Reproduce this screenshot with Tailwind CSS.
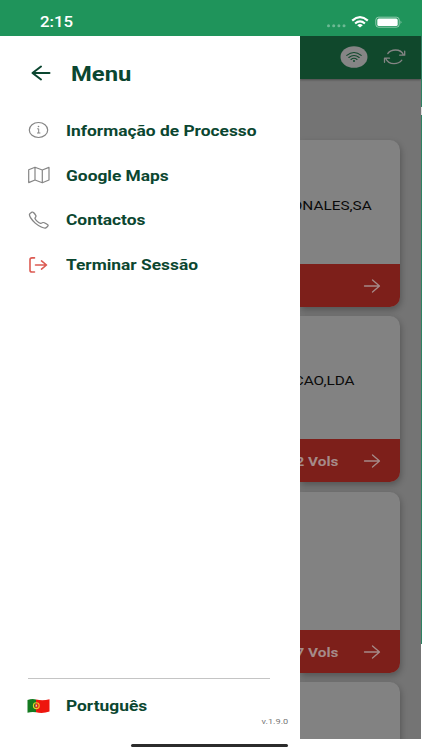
<!DOCTYPE html>
<html lang="pt">
<head>
<meta charset="utf-8">
<title>Menu</title>
<script src="https://cdn.jsdelivr.net/npm/@tailwindcss/browser@4"></script>
</head>
<body class="w-[422px] h-[750px] overflow-hidden bg-white font-['Roboto','Liberation_Sans',sans-serif] flex flex-col">
  <header class="h-9 shrink-0 bg-[#1f945b] flex items-start text-white">
    <span class="ml-[40px] mt-[13px] w-[280px] text-[14.5px] leading-[20px] font-medium"><span class="inline-block origin-left scale-x-[1.16]">2:15</span></span>
    <svg class="ml-[6px] mt-[16px] w-[80px] h-[13px] shrink-0" viewBox="0 0 80 13">
      <g fill="#fff" opacity=".35"><circle cx="2.500" cy="9.800" r="1.500"/><circle cx="7.700" cy="9.800" r="1.500"/><circle cx="12.900" cy="9.800" r="1.500"/><circle cx="18" cy="9.800" r="1.500"/></g>
      <g fill="none" stroke="#fff" stroke-width="2.200"><path d="M26.200 4.600Q34-2.200 41.800 4.600"/><path d="M29.100 7.500Q34 3.300 38.900 7.500"/></g>
      <path d="M31.200 9.200Q34 7 36.800 9.200L34 11.600z" fill="#fff"/>
      <rect x="49.800" y="1.200" width="23.400" height="10" rx="2.800" fill="none" stroke="#fff" stroke-opacity=".5"/>
      <rect x="51.300" y="2.600" width="20.400" height="7.300" rx="1.500" fill="#fff"/>
      <path d="M74.600 4.500q1.800 1.600 0 3.400z" fill="#fff" opacity=".6"/>
    </svg>
  </header>

  <div class="flex-1 flex min-h-0">
    <aside class="w-[300px] shrink-0 bg-white text-[#0b4630] flex flex-col">
      <div class="h-[72px] flex items-center pl-[31px] pt-[2px]">
        <svg class="w-5 h-4" viewBox="0 0 20 16" fill="none" stroke="#0b4630" stroke-width="2" stroke-linecap="round" stroke-linejoin="round"><path d="M18.500 8H1.500M10 1.500L1.500 8L10 14.500"/></svg>
        <h1 class="ml-[20px] pt-[3px] text-[19.5px] leading-6 font-bold"><span class="inline-block origin-left scale-x-[1.22]">Menu</span></h1>
      </div>
      <nav class="flex flex-col text-[14.5px] font-bold">
        <a class="h-[45px] flex items-center pl-7">
          <svg class="w-[22px] h-[18px] -mt-px" viewBox="0 0 22 18" fill="none" stroke="#858585"><ellipse cx="10.500" cy="9" rx="9.200" ry="7.500" stroke-width="1.200"/><path d="M9.200 7.800h1.500v4.200M9 12h3.400" stroke-width="1"/><circle cx="10.500" cy="5.500" r=".8" fill="#858585" stroke="none"/></svg>
          <span class="ml-[15.5px] pt-[2px]"><span class="inline-block whitespace-nowrap origin-left scale-x-[1.197]">Informação de Processo</span></span>
        </a>
        <a class="h-[45px] flex items-center pl-7">
          <svg class="w-[22px] h-[18px] -mt-px" viewBox="0 0 22 18" fill="none" stroke="#858585" stroke-width="1.200" stroke-linejoin="round"><path d="M.7 3.800L7 1.200L14.300 4L21 1.400V14L14.300 16.800L7 14L.7 16.600zM7 1.200V14M14.300 4V16.800"/></svg>
          <span class="ml-[15.5px] pt-[2px]"><span class="inline-block whitespace-nowrap origin-left scale-x-[1.197]">Google Maps</span></span>
        </a>
        <a class="h-[44px] flex items-center pl-7">
          <svg class="w-[22px] h-[18px] -mt-px" viewBox="15 22 490 466" preserveAspectRatio="none" fill="none" stroke="#858585" stroke-width="30" stroke-linejoin="round"><path d="M451 374c-15.880-16-54.340-39.350-73-48.760-24.300-12.240-26.300-13.240-45.400.950-12.740 9.470-21.210 17.930-36.120 14.750s-47.310-21.110-75.680-49.390-47.340-61.620-50.530-76.480 5.410-23.230 14.790-36c13.220-18 12.220-21 .920-45.300-8.810-18.900-32.840-57-48.900-72.800C119.900 44 119.900 47 108.830 51.600A160.150 160.150 0 0083 65.370C67 76 58.120 84.830 51.910 98.100s-9 44.380 23.070 102.640 54.570 88.050 101.140 134.490S258.500 406.640 310.850 436c64.760 36.270 89.600 29.200 102.910 23s22.180-15 32.830-31a159.090 159.090 0 0013.800-25.800C465 391.170 468 391.170 451 374z"/></svg>
          <span class="ml-[15.5px] pt-[2px]"><span class="inline-block whitespace-nowrap origin-left scale-x-[1.197]">Contactos</span></span>
        </a>
        <a class="h-[46px] flex items-center pl-7">
          <svg class="w-[22px] h-[18px] -mt-px" viewBox="0 0 22 18" fill="none" stroke="#dc5a52" stroke-width="1.600" stroke-linecap="round" stroke-linejoin="round"><path d="M6.500 1.900H4Q2 1.900 2 3.700V14.200Q2 16 4 16H6.500M7.500 9H18.500M13.500 4.900L18.500 9L13.500 13.100"/></svg>
          <span class="ml-[15.5px] pt-[2px]"><span class="inline-block whitespace-nowrap origin-left scale-x-[1.197]">Terminar Sessão</span></span>
        </a>
      </nav>
      <footer class="mt-auto h-[72px] flex flex-col">
        <hr class="ml-7 w-[242px] border-[#c4c4c4]">
        <div class="flex items-center pl-[27px] mt-[16px] h-[22px] text-[14.5px] font-bold">
          <svg class="w-[23px] h-[16px] -mt-px" viewBox="0 0 23 16"><path d="M.5 2Q5 .4 9 1.500V14.300Q5 13.300 .5 14.800z" fill="#147a20"/><path d="M9 1.500Q16 3 22.500 1.200V13.500Q16 15.800 9 14.300z" fill="#ee160e"/><circle cx="9.300" cy="7.700" r="2.900" fill="none" stroke="#e8cc2b" stroke-width="1.100"/><rect x="7.900" y="5.900" width="2.800" height="3.500" rx="1" fill="#dc3525"/><path d="M9.300 6.700V8.600" stroke="#f5eee5"/></svg>
          <span class="ml-[15.5px] pt-[2px]"><span class="inline-block whitespace-nowrap origin-left scale-x-[1.197]">Português</span></span>
        </div>
        <span class="self-end mr-[12px] text-[8px] leading-[10px] text-[#777]"><span class="inline-block origin-right scale-x-[1.15]">v.1.9.0</span></span>
      </footer>
    </aside>

    <main class="w-[121px] h-[703px] shrink-0 bg-[#747474] overflow-hidden flex flex-col">
      <div class="h-[43px] shrink-0 bg-[#10482c] flex items-center shadow-[0_1px_2px_#0005]">
        <svg class="ml-[40px] -mt-px w-[28px] h-[22px]" viewBox="0 0 28 22"><ellipse cx="14" cy="11" rx="13.500" ry="10.800" fill="#858585"/><g fill="none" stroke="#10482c" stroke-width="1.100" stroke-linecap="round"><path d="M6.800 9.400Q14 3.700 21.200 9.400M8.800 11.500Q14 7.400 19.200 11.500M11 13.500Q14 11.100 17 13.500"/></g><circle cx="14" cy="15.100" r="1" fill="#10482c"/></svg>
        <svg class="ml-[15px] -mt-px w-[24px] h-[18px]" viewBox="0 0 24 18" fill="none" stroke="#858585" stroke-width="1.300" stroke-linecap="round" stroke-linejoin="round"><path d="M21.700 3.200V7.200H16.700M20.500 7Q18.500 2 12.500 2Q7.500 2 4.800 5.500M1.500 14.300V10.200H6.500M2.700 10.500Q5 15.700 11 15.700Q16 15.700 18.800 12.200"/></svg>
      </div>
      <div class="mt-[61px] w-[100px] flex flex-col gap-[9px] text-[13px]">
        <section class="h-[167px] rounded-r-[10px] bg-[#828282] shadow-[1px_3px_6px_#0004] overflow-hidden flex flex-col">
          <div class="h-[124px] flex items-center justify-end pr-[28.5px] pt-[7px] text-[#0a0a0a]"><span class="whitespace-nowrap inline-block origin-right scale-x-[1.18]">ONALES,SA</span></div>
          <div class="flex-1 bg-[#7d1f1a] flex items-center justify-end pr-[19px]"><svg class="w-[18px] h-[14px]" viewBox="0 0 18 14" fill="none" stroke="#a58b89" stroke-width="1.300" stroke-linecap="round" stroke-linejoin="round"><path d="M1.500 7H16.500M9.500 1L16.500 7L9.500 13"/></svg></div>
        </section>
        <section class="h-[166px] rounded-r-[10px] bg-[#828282] shadow-[1px_3px_6px_#0004] overflow-hidden flex flex-col">
          <div class="h-[123px] flex items-center justify-end pr-[45px] pt-[7px] text-[#0a0a0a]"><span class="whitespace-nowrap inline-block origin-right scale-x-[1.18]">CAO,LDA</span></div>
          <div class="flex-1 bg-[#7d1f1a] flex items-center justify-end pr-[19px]"><span class="mr-[24.5px] pt-[3px] font-bold text-[#a58b89] whitespace-nowrap"><span class="inline-block origin-right scale-x-[1.18]">2 Vols</span></span><svg class="w-[18px] h-[14px]" viewBox="0 0 18 14" fill="none" stroke="#a58b89" stroke-width="1.300" stroke-linecap="round" stroke-linejoin="round"><path d="M1.500 7H16.500M9.500 1L16.500 7L9.500 13"/></svg></div>
        </section>
        <section class="mt-px h-[181px] rounded-r-[10px] bg-[#828282] shadow-[1px_3px_6px_#0004] overflow-hidden flex flex-col">
          <div class="h-[138px]"></div>
          <div class="flex-1 bg-[#7d1f1a] flex items-center justify-end pr-[19px]"><span class="mr-[24.5px] pt-[3px] font-bold text-[#a58b89] whitespace-nowrap"><span class="inline-block origin-right scale-x-[1.18]">7 Vols</span></span><svg class="w-[18px] h-[14px]" viewBox="0 0 18 14" fill="none" stroke="#a58b89" stroke-width="1.300" stroke-linecap="round" stroke-linejoin="round"><path d="M1.500 7H16.500M9.500 1L16.500 7L9.500 13"/></svg></div>
        </section>
        <section class="h-[120px] rounded-r-[10px] bg-[#828282] shadow-[1px_3px_6px_#0004]"></section>
      </div>
    </main>
    <div class="w-px h-[608px] bg-[#2e8162] pt-[71px]"><div class="h-2 bg-[#ddd]"></div></div>
  </div>
  <div class="absolute left-[131px] top-[744px] w-[157px] h-[3px] rounded-full bg-[#2b2b2b]"></div>
</body>
</html>
